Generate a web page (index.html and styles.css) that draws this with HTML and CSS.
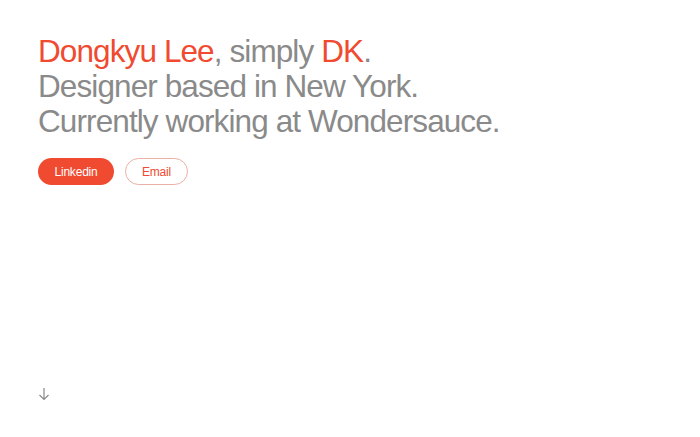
FILE: index.html
```html
<!DOCTYPE html>
<html lang="en">
  <head>
    <title>Dongkyu Lee</title>
    <link rel="stylesheet" href="styles.css">
  </head>
  <body>
    <main class="intro">
      <h1 class="headline">
        <span class="accent">Dongkyu Lee</span>, simply <span class="accent">DK</span>.<br>
        Designer based in New York.<br>
        Currently working at Wondersauce.
      </h1>
      <div class="links">
        <a class="btn btn-fill" href="#">Linkedin</a>
        <a class="btn btn-line" href="#">Email</a>
      </div>
    </main>
    <div class="scroll-hint">
      <svg width="14" height="14" viewBox="0 0 14 14" fill="none" stroke="#8a8a8a" stroke-width="1.2">
        <path d="M7 1v11.5M2.5 8l4.5 4.5L11.5 8" />
      </svg>
    </div>
  </body>
</html>
```

FILE: styles.css
```css
body {
  margin: 0;
  font-family: "Liberation Sans", Arial, sans-serif;
  background-color: #ffffff;
  height: 437px;
  display: flex;
  flex-direction: column;
  justify-content: space-between;
}

.intro {
  padding: 34px 38px 0;
}

.headline {
  margin: 0;
  font-size: 31.5px;
  font-weight: 400;
  line-height: 35px;
  letter-spacing: -0.9px;
  color: #8a8a8a;
}

.accent {
  color: #f04a30;
}

.links {
  display: flex;
  gap: 11px;
  margin-top: 19px;
}

.btn {
  display: inline-flex;
  align-items: center;
  justify-content: center;
  height: 27px;
  box-sizing: border-box;
  border-radius: 14px;
  font-size: 12px;
  text-decoration: none;
  letter-spacing: -0.2px;
}

.btn-fill {
  width: 76px;
  background-color: #f04a30;
  color: #ffffff;
}

.btn-line {
  width: 63px;
  border: 1px solid #eab0a6;
  color: #f04a30;
}

.scroll-hint {
  padding: 0 0 36px 37px;
}

.scroll-hint svg {
  display: block;
}
```
